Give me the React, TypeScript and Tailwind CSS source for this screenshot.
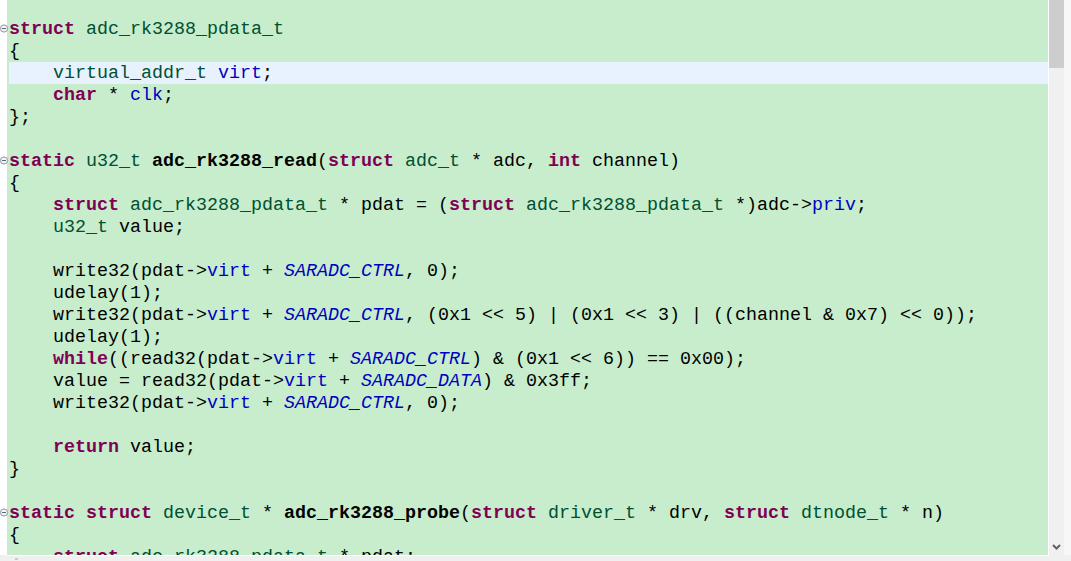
import type { ReactNode } from "react";

const K = ({ children }: { children: ReactNode }) => <span className="font-bold text-[#7f0055]">{children}</span>;
const T = ({ children }: { children: ReactNode }) => <span className="text-[#005032]">{children}</span>;
const F = ({ children }: { children: ReactNode }) => <span className="text-[#0000c0]">{children}</span>;
const M = ({ children }: { children: ReactNode }) => <span className="italic text-[#0000c0]">{children}</span>;
const B = ({ children }: { children: ReactNode }) => <span className="font-bold text-black">{children}</span>;

const Fold = () => (
    <svg className="absolute left-0 top-[6px]" width="9" height="9" viewBox="0 0 9 9">
        <circle cx="4" cy="4.5" r="3.6" fill="#f4f4f4" stroke="#8a96a8" strokeWidth="1" />
        <line x1="2" y1="4.5" x2="6" y2="4.5" stroke="#5a6678" strokeWidth="1" />
    </svg>
);

const Line = ({ children, active }: { children?: ReactNode; active?: boolean }) => (
    <div className={`h-[22px] leading-[22px] whitespace-pre ${active ? "bg-[#e8f2fe]" : ""}`}>
        <span className="relative top-px">
            {children}
            {"\u200b"}
        </span>
    </div>
);

const I = "    ";
const folds = [0, 6, 22];

const App = () => {
    return (
        <div
            className="w-[1071px] h-[561px] overflow-hidden flex flex-col bg-[#f0f0f0] text-black"
            style={{ fontFamily: '"Liberation Mono", "Courier New", monospace' }}
        >
            <div className="flex h-[555px]">
                <div className="relative z-10 w-[7px] bg-white pt-[18px]">
                    {Array.from({ length: 24 }, (_, i) => (
                        <div key={i} className="relative h-[22px]">
                            {folds.includes(i) && <Fold />}
                        </div>
                    ))}
                </div>
                <div className="flex-1 bg-[#c7edcc] pt-[18px] pl-[2px] overflow-hidden text-[18.33px]">
                    <Line><K>struct</K> <T>adc_rk3288_pdata_t</T></Line>
                    <Line>{"{"}</Line>
                    <Line active>{I}<T>virtual_addr_t</T> <F>virt</F>;</Line>
                    <Line>{I}<K>char</K> * <F>clk</F>;</Line>
                    <Line>{"};"}</Line>
                    <Line />
                    <Line><K>static</K> <T>u32_t</T> <B>adc_rk3288_read</B>(<K>struct</K> <T>adc_t</T> * adc, <K>int</K> channel)</Line>
                    <Line>{"{"}</Line>
                    <Line>{I}<K>struct</K> <T>adc_rk3288_pdata_t</T> * pdat = (<K>struct</K> <T>adc_rk3288_pdata_t</T> *)adc-&gt;<F>priv</F>;</Line>
                    <Line>{I}<T>u32_t</T> value;</Line>
                    <Line />
                    <Line>{I}write32(pdat-&gt;<F>virt</F> + <M>SARADC_CTRL</M>, 0);</Line>
                    <Line>{I}udelay(1);</Line>
                    <Line>{I}write32(pdat-&gt;<F>virt</F> + <M>SARADC_CTRL</M>, (0x1 &lt;&lt; 5) | (0x1 &lt;&lt; 3) | ((channel &amp; 0x7) &lt;&lt; 0));</Line>
                    <Line>{I}udelay(1);</Line>
                    <Line>{I}<K>while</K>((read32(pdat-&gt;<F>virt</F> + <M>SARADC_CTRL</M>) &amp; (0x1 &lt;&lt; 6)) == 0x00);</Line>
                    <Line>{I}value = read32(pdat-&gt;<F>virt</F> + <M>SARADC_DATA</M>) &amp; 0x3ff;</Line>
                    <Line>{I}write32(pdat-&gt;<F>virt</F> + <M>SARADC_CTRL</M>, 0);</Line>
                    <Line />
                    <Line>{I}<K>return</K> value;</Line>
                    <Line>{"}"}</Line>
                    <Line />
                    <Line><K>static</K> <K>struct</K> <T>device_t</T> * <B>adc_rk3288_probe</B>(<K>struct</K> <T>driver_t</T> * drv, <K>struct</K> <T>dtnode_t</T> * n)</Line>
                    <Line>{"{"}</Line>
                    <Line>{I}<K>struct</K> <T>adc_rk3288_pdata_t</T> * pdat;</Line>
                </div>
                <div className="w-px bg-white" />
                <div className="w-[15px] bg-[#f0f0f0] flex flex-col justify-between">
                    <div className="h-[68px] bg-[#cdcdcd]" />
                    <div className="h-[16px] flex items-center justify-center">
                        <svg width="9" height="6" viewBox="0 0 9 6">
                            <path d="M1 1 L4.5 4.5 L8 1" fill="none" stroke="#606060" strokeWidth="2" />
                        </svg>
                    </div>
                </div>
                <div className="w-[7px] bg-[#f7f7f7]" />
            </div>
            <div className="flex h-[6px]">
                <div className="w-[7px] bg-[#f0f0f0]" />
                <div className="flex-1 flex flex-col">
                    <div className="h-px bg-white" />
                    <div className="flex-1 bg-[#f0f0f0] pl-[8px] pt-[2px]">
                        <div className="w-[3px] h-[2px] bg-[#c8c8c8]" />
                    </div>
                </div>
                <div className="w-[22px] bg-[#f0f0f0]" />
            </div>
        </div>
    );
};

export default App;
